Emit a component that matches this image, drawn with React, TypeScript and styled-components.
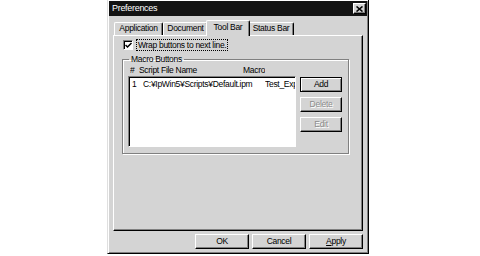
import styled, { createGlobalStyle } from "styled-components";

const GlobalStyle = createGlobalStyle`
  html, body {
    margin: 0;
    padding: 0;
    background: #fff;
  }
  body {
    font-family: "Liberation Sans", Arial, sans-serif;
    font-size: 8.5px;
    letter-spacing: -0.3px;
    color: #000;
  }
`;

const FACE = "#d4d4d4";

const Page = styled.div`
  width: 480px;
  height: 256px;
  overflow: hidden;
  padding-left: 107px;
  box-sizing: border-box;
`;

const Window = styled.div`
  margin-top: -1px;
  width: 262px;
  height: 255px;
  box-sizing: border-box;
  background: ${FACE};
  border: 1px solid;
  border-color: #dfdfdf #000 #000 #dfdfdf;
  box-shadow: inset 1px 1px 0 #fff, inset -1px -1px 0 #808080;
  padding: 1px;
  display: flex;
  flex-direction: column;
`;

const TitleBar = styled.div`
  height: 15px;
  flex: none;
  background: #131313;
  display: flex;
  align-items: center;
  justify-content: space-between;
  padding: 0 1px 0 3px;
`;

const Title = styled.span`
  color: #fff;
  font-size: 9px;
  line-height: 15px;
`;

const CloseButton = styled.div`
  width: 13px;
  height: 11px;
  box-sizing: border-box;
  background: ${FACE};
  border: 1px solid;
  border-color: #fff #000 #000 #fff;
  box-shadow: inset -1px -1px 0 #808080;
  display: flex;
  align-items: center;
  justify-content: center;
`;

const Body = styled.div`
  flex: 1;
  display: flex;
  flex-direction: column;
  padding: 4px 4px 3px 4px;
`;

const TabStrip = styled.div`
  display: flex;
  height: 15px;
  padding-left: 1px;
  position: relative;
  z-index: 1;
`;

const Tab = styled.div<{ $active?: boolean; $w: number }>`
  box-sizing: border-box;
  width: ${(p) => (p.$active ? p.$w + 4 : p.$w)}px;
  height: ${(p) => (p.$active ? 16 : 13)}px;
  margin: ${(p) => (p.$active ? "0 -2px" : "2px 0 0 0")};
  background: ${FACE};
  border-top: 1px solid #fff;
  border-left: 1px solid #fff;
  border-right: 1px solid #000;
  border-top-left-radius: 2px;
  border-top-right-radius: 2px;
  box-shadow: inset -1px 0 0 #808080;
  position: relative;
  z-index: ${(p) => (p.$active ? 2 : 1)};
  text-align: center;
  line-height: ${(p) => (p.$active ? 12 : 11)}px;
  white-space: nowrap;
`;

const Panel = styled.div`
  flex: 1;
  background: ${FACE};
  border: 1px solid;
  border-color: #fff #000 #000 #fff;
  box-shadow: inset -1px -1px 0 #808080;
  padding: 3px 12px 0 8px;
  display: flex;
  flex-direction: column;
  align-items: flex-start;
`;

const CheckRow = styled.label`
  display: flex;
  align-items: center;
  height: 12px;
  gap: 3px;
  margin-left: 1px;
`;

const CheckBox = styled.span`
  width: 10px;
  height: 10px;
  box-sizing: border-box;
  background: #fff;
  border: 1px solid;
  border-color: #808080 #fff #fff #808080;
  box-shadow: inset 1px 1px 0 #000;
  display: flex;
  align-items: center;
  justify-content: center;
`;

const FocusText = styled.span`
  border: 1px dotted #000;
  padding: 0 1px;
  line-height: 10px;
`;

const Group = styled.fieldset`
  margin: 3px 0 0 0;
  width: 227px;
  box-sizing: border-box;
  padding: 0 5px 6px 5px;
  border: 1px solid #808080;
  box-shadow: inset 1px 1px 0 #fff, 1px 1px 0 #fff;
  display: grid;
  grid-template-columns: 168px 42px;
  grid-template-rows: 12px 71px;
  column-gap: 4px;
`;

const Legend = styled.legend`
  margin-left: 1px;
  padding: 0 2px;
  line-height: 10px;
`;

const HeaderRow = styled.div`
  display: flex;
  align-items: center;
  padding-left: 2px;
  white-space: nowrap;
`;

const Col = styled.span<{ $w?: number }>`
  flex: none;
  width: ${(p) => (p.$w ? `${p.$w}px` : "auto")};
  overflow: hidden;
  white-space: nowrap;
`;

const ListBox = styled.div`
  grid-column: 1;
  grid-row: 2;
  background: #fff;
  box-sizing: border-box;
  border: 1px solid;
  border-color: #808080 #fff #fff #808080;
  box-shadow: inset 1px 1px 0 #000;
  padding: 2px 0 0 3px;
  overflow: hidden;
`;

const ListRow = styled.div`
  display: flex;
  height: 11px;
  line-height: 11px;
  white-space: nowrap;
`;

const SideButtons = styled.div`
  grid-column: 2;
  grid-row: 2;
  display: flex;
  flex-direction: column;
  gap: 5px;
  padding-top: 1px;
`;

const Button = styled.button<{ $default?: boolean; $w: number }>`
  width: ${(p) => p.$w}px;
  height: 15px;
  padding: 0;
  box-sizing: border-box;
  font: inherit;
  letter-spacing: inherit;
  color: #000;
  background: ${FACE};
  border: 1px solid;
  border-color: ${(p) => (p.$default ? "#000" : "#fff #000 #000 #fff")};
  box-shadow: ${(p) =>
    p.$default
      ? "inset 1px 1px 0 #fff, inset -1px -1px 0 #808080"
      : "inset -1px -1px 0 #808080"};
  line-height: 13px;

  &:disabled {
    color: #8c8c8c;
    text-shadow: 1px 1px 0 #fff;
  }
`;

const Footer = styled.div`
  display: flex;
  justify-content: flex-end;
  gap: 3px;
  margin-top: 3px;
`;

export default function App() {
  return (
    <Page>
      <GlobalStyle />
      <Window>
        <TitleBar>
          <Title>Preferences</Title>
          <CloseButton>
            <svg width="7" height="6" viewBox="0 0 7 6">
              <path d="M0.5 0.5 L6.5 5.5 M6.5 0.5 L0.5 5.5" stroke="#000" strokeWidth="1.6" />
            </svg>
          </CloseButton>
        </TitleBar>
        <Body>
          <TabStrip>
            <Tab $w={49}>Application</Tab>
            <Tab $w={45}>Document</Tab>
            <Tab $w={40} $active>
              Tool Bar
            </Tab>
            <Tab $w={46}>Status Bar</Tab>
          </TabStrip>
          <Panel>
            <CheckRow>
              <CheckBox>
                <svg width="7" height="7" viewBox="0 0 7 7">
                  <path d="M0.5 3 L2.5 5 L6.5 1" stroke="#000" strokeWidth="1.5" fill="none" />
                </svg>
              </CheckBox>
              <FocusText>Wrap buttons to next line.</FocusText>
            </CheckRow>
            <Group>
              <Legend>Macro Buttons</Legend>
              <HeaderRow>
                <Col $w={9}>#</Col>
                <Col $w={104}>Script File Name</Col>
                <Col>Macro</Col>
              </HeaderRow>
              <ListBox>
                <ListRow>
                  <Col $w={11}>1</Col>
                  <Col $w={122}>C:¥IpWin5¥Scripts¥Default.ipm</Col>
                  <Col>Test_Exp</Col>
                </ListRow>
              </ListBox>
              <SideButtons>
                <Button $w={42} $default>
                  Add
                </Button>
                <Button $w={42} disabled>
                  Delete
                </Button>
                <Button $w={42} disabled>
                  Edit
                </Button>
              </SideButtons>
            </Group>
          </Panel>
          <Footer>
            <Button $w={54}>OK</Button>
            <Button $w={54}>Cancel</Button>
            <Button $w={54}>
              <u>A</u>pply
            </Button>
          </Footer>
        </Body>
      </Window>
    </Page>
  );
}
